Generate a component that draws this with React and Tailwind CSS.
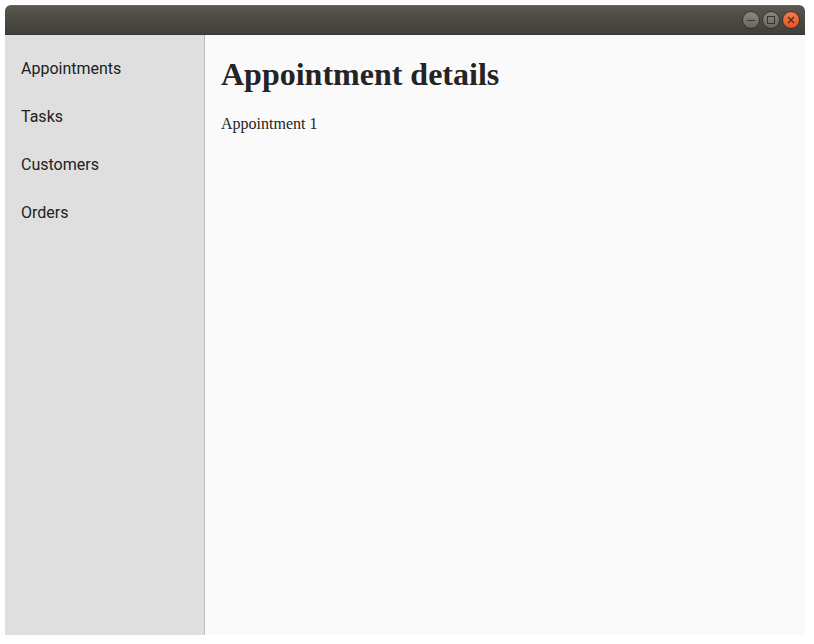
const navItems = ['Appointments', 'Tasks', 'Customers', 'Orders'];

function WindowButton({ kind }) {
  const close = kind === 'close';
  const id = `fill-${kind}`;
  return (
    <button type="button" aria-label={kind} className="block size-5">
      <svg viewBox="0 0 20 20" className="block size-5" fill="none">
        <defs>
          <linearGradient id={id} x1="0" y1="0" x2="0" y2="1">
            <stop offset="0" stopColor={close ? '#f67c52' : '#8a8880'} />
            <stop offset="1" stopColor={close ? '#e5531f' : '#67655e'} />
          </linearGradient>
        </defs>
        <circle cx="10" cy="10" r="8.5" fill={`url(#${id})`} stroke="#33322e" strokeWidth="1" />
        {kind === 'minimize' && <path d="M6 10.5h8" stroke="#35342f" />}
        {kind === 'maximize' && <rect x="6.5" y="6.5" width="7" height="7" stroke="#35342f" />}
        {close && <path d="M7 7l6 6M13 7l-6 6" stroke="#4a2a14" strokeWidth="1.2" />}
      </svg>
    </button>
  );
}

export default function App() {
  return (
    <div className="h-[644px] w-[814px] bg-white p-[5px]">
      <div className="flex h-[630px] w-[800px] flex-col overflow-hidden rounded-t-[6px]">
        <header className="flex h-[30px] shrink-0 items-center justify-end border-t border-b border-t-[#65635a] border-b-[#383733] bg-linear-to-b from-[#59574e] to-[#3f3e39] pr-1">
          <WindowButton kind="minimize" />
          <WindowButton kind="maximize" />
          <WindowButton kind="close" />
        </header>
        <div className="flex min-h-0 flex-1">
          <nav className="w-[200px] shrink-0 border-r border-[#bdbdbd] bg-[#dfdfdf] pt-[10px]">
            {navItems.map((item) => (
              <a
                key={item}
                className="flex h-12 items-center px-4 font-[Roboto,sans-serif] text-base text-[#212121]"
              >
                {item}
              </a>
            ))}
          </nav>
          <main className="flex-1 bg-[#fafafa] px-4 pt-[21px] font-['Liberation_Serif',serif] text-[#242424]">
            <h1 className="text-[32px] leading-[37px] font-bold">Appointment details</h1>
            <p className="mt-[22px] text-base leading-[18px]">Appointment 1</p>
          </main>
        </div>
      </div>
    </div>
  );
}
